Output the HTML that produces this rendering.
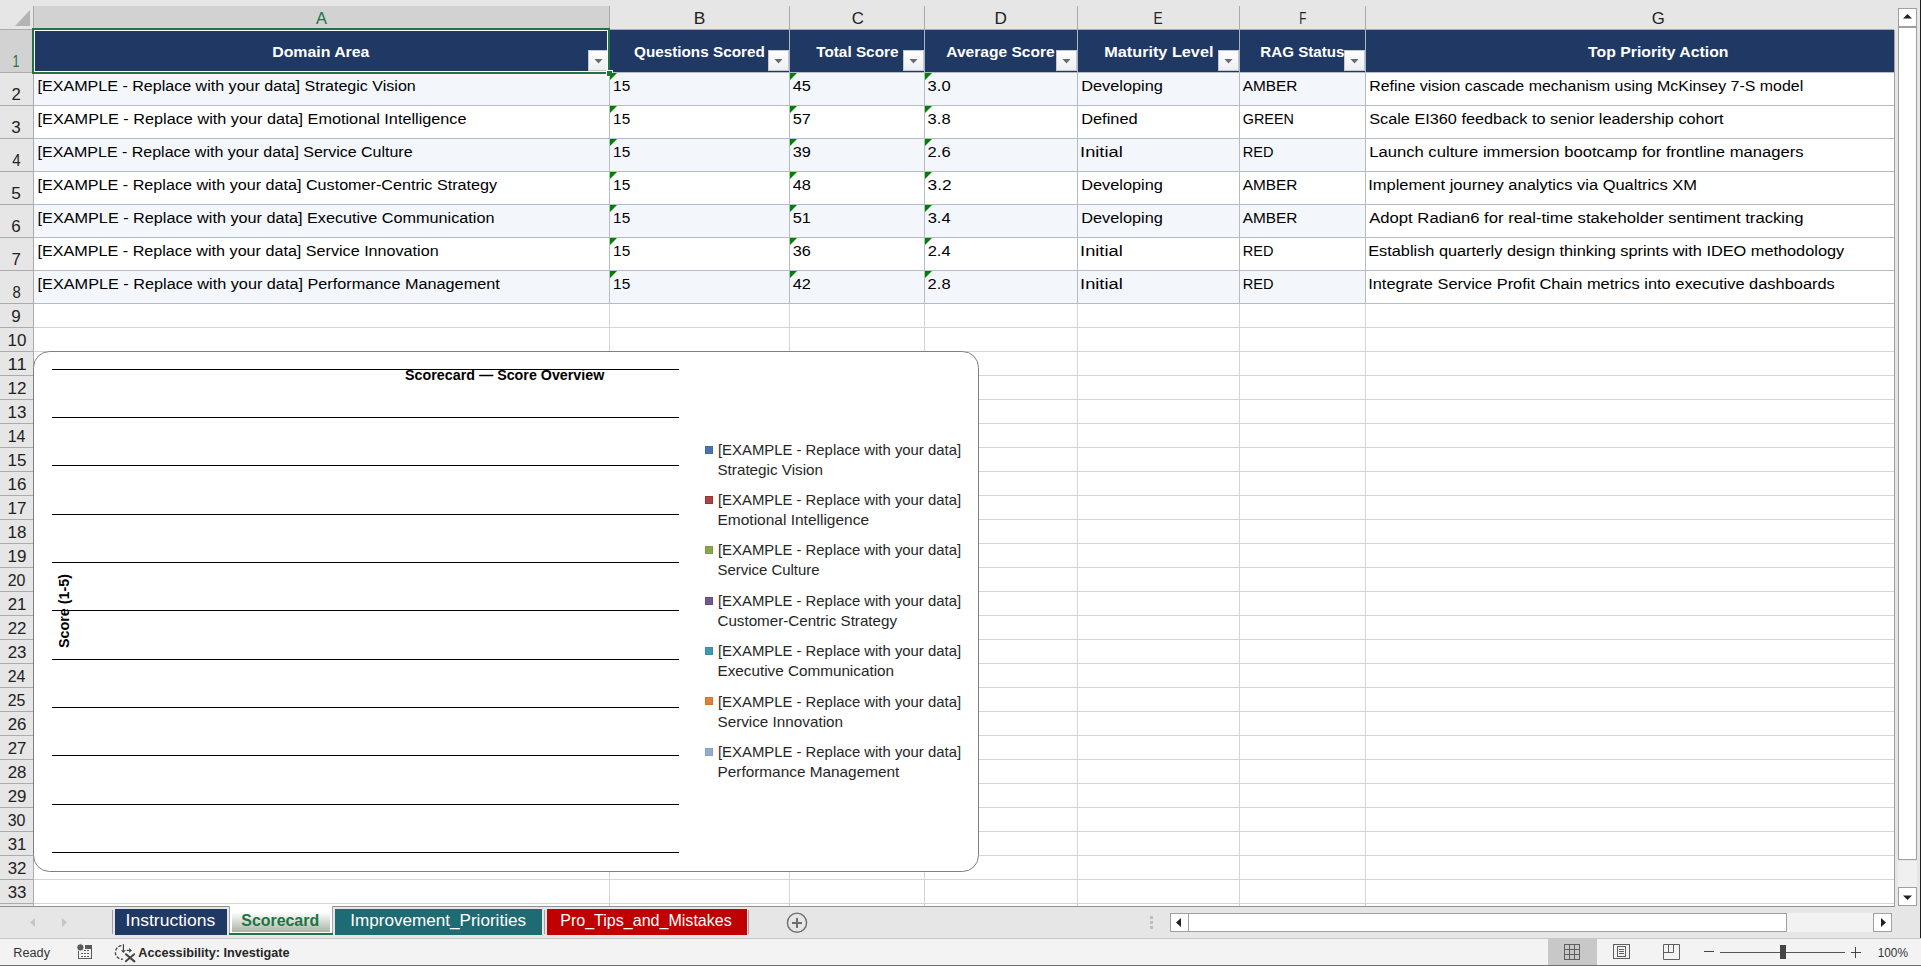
<!DOCTYPE html>
<html><head><meta charset="utf-8"><title>Scorecard</title>
<style>html,body{margin:0;padding:0;background:#E6E6E6;overflow:hidden;}svg{display:block;}</style>
</head><body>
<svg width="1921" height="966" viewBox="0 0 1921 966" font-family="'Liberation Sans', sans-serif">
<rect x="0" y="0" width="1921" height="966" fill="#E6E6E6" />
<rect x="34" y="30" width="1860" height="876" fill="#FFFFFF" />
<rect x="34" y="6" width="575" height="22" fill="#D2D2D2" />
<rect x="33" y="6" width="1" height="23" fill="#ABABAB" />
<rect x="609" y="6" width="1" height="23" fill="#ABABAB" />
<rect x="789" y="6" width="1" height="23" fill="#ABABAB" />
<rect x="924" y="6" width="1" height="23" fill="#ABABAB" />
<rect x="1077" y="6" width="1" height="23" fill="#ABABAB" />
<rect x="1239" y="6" width="1" height="23" fill="#ABABAB" />
<rect x="1365" y="6" width="1" height="23" fill="#ABABAB" />
<rect x="0" y="29" width="1894" height="1" fill="#ABABAB" />
<path d="M15 26 L30 10 L30 26 Z" fill="#B4B4B4"/>
<rect x="0" y="30" width="33" height="42" fill="#D2D2D2" />
<rect x="0" y="72" width="33" height="1" fill="#ABABAB" />
<rect x="0" y="105" width="33" height="1" fill="#ABABAB" />
<rect x="0" y="138" width="33" height="1" fill="#ABABAB" />
<rect x="0" y="171" width="33" height="1" fill="#ABABAB" />
<rect x="0" y="204" width="33" height="1" fill="#ABABAB" />
<rect x="0" y="237" width="33" height="1" fill="#ABABAB" />
<rect x="0" y="270" width="33" height="1" fill="#ABABAB" />
<rect x="0" y="303" width="33" height="1" fill="#ABABAB" />
<rect x="0" y="327" width="33" height="1" fill="#ABABAB" />
<rect x="0" y="351" width="33" height="1" fill="#ABABAB" />
<rect x="0" y="375" width="33" height="1" fill="#ABABAB" />
<rect x="0" y="399" width="33" height="1" fill="#ABABAB" />
<rect x="0" y="423" width="33" height="1" fill="#ABABAB" />
<rect x="0" y="447" width="33" height="1" fill="#ABABAB" />
<rect x="0" y="471" width="33" height="1" fill="#ABABAB" />
<rect x="0" y="495" width="33" height="1" fill="#ABABAB" />
<rect x="0" y="519" width="33" height="1" fill="#ABABAB" />
<rect x="0" y="543" width="33" height="1" fill="#ABABAB" />
<rect x="0" y="567" width="33" height="1" fill="#ABABAB" />
<rect x="0" y="591" width="33" height="1" fill="#ABABAB" />
<rect x="0" y="615" width="33" height="1" fill="#ABABAB" />
<rect x="0" y="639" width="33" height="1" fill="#ABABAB" />
<rect x="0" y="663" width="33" height="1" fill="#ABABAB" />
<rect x="0" y="687" width="33" height="1" fill="#ABABAB" />
<rect x="0" y="711" width="33" height="1" fill="#ABABAB" />
<rect x="0" y="735" width="33" height="1" fill="#ABABAB" />
<rect x="0" y="759" width="33" height="1" fill="#ABABAB" />
<rect x="0" y="783" width="33" height="1" fill="#ABABAB" />
<rect x="0" y="807" width="33" height="1" fill="#ABABAB" />
<rect x="0" y="831" width="33" height="1" fill="#ABABAB" />
<rect x="0" y="855" width="33" height="1" fill="#ABABAB" />
<rect x="0" y="879" width="33" height="1" fill="#ABABAB" />
<rect x="0" y="903" width="33" height="1" fill="#ABABAB" />
<rect x="33" y="6" width="1" height="900" fill="#ABABAB" />
<rect x="34" y="327" width="1860" height="1" fill="#D4D4D4" />
<rect x="34" y="351" width="1860" height="1" fill="#D4D4D4" />
<rect x="34" y="375" width="1860" height="1" fill="#D4D4D4" />
<rect x="34" y="399" width="1860" height="1" fill="#D4D4D4" />
<rect x="34" y="423" width="1860" height="1" fill="#D4D4D4" />
<rect x="34" y="447" width="1860" height="1" fill="#D4D4D4" />
<rect x="34" y="471" width="1860" height="1" fill="#D4D4D4" />
<rect x="34" y="495" width="1860" height="1" fill="#D4D4D4" />
<rect x="34" y="519" width="1860" height="1" fill="#D4D4D4" />
<rect x="34" y="543" width="1860" height="1" fill="#D4D4D4" />
<rect x="34" y="567" width="1860" height="1" fill="#D4D4D4" />
<rect x="34" y="591" width="1860" height="1" fill="#D4D4D4" />
<rect x="34" y="615" width="1860" height="1" fill="#D4D4D4" />
<rect x="34" y="639" width="1860" height="1" fill="#D4D4D4" />
<rect x="34" y="663" width="1860" height="1" fill="#D4D4D4" />
<rect x="34" y="687" width="1860" height="1" fill="#D4D4D4" />
<rect x="34" y="711" width="1860" height="1" fill="#D4D4D4" />
<rect x="34" y="735" width="1860" height="1" fill="#D4D4D4" />
<rect x="34" y="759" width="1860" height="1" fill="#D4D4D4" />
<rect x="34" y="783" width="1860" height="1" fill="#D4D4D4" />
<rect x="34" y="807" width="1860" height="1" fill="#D4D4D4" />
<rect x="34" y="831" width="1860" height="1" fill="#D4D4D4" />
<rect x="34" y="855" width="1860" height="1" fill="#D4D4D4" />
<rect x="34" y="879" width="1860" height="1" fill="#D4D4D4" />
<rect x="34" y="903" width="1860" height="1" fill="#D4D4D4" />
<rect x="609" y="304" width="1" height="602" fill="#D4D4D4" />
<rect x="789" y="304" width="1" height="602" fill="#D4D4D4" />
<rect x="924" y="304" width="1" height="602" fill="#D4D4D4" />
<rect x="1077" y="304" width="1" height="602" fill="#D4D4D4" />
<rect x="1239" y="304" width="1" height="602" fill="#D4D4D4" />
<rect x="1365" y="304" width="1" height="602" fill="#D4D4D4" />
<rect x="34" y="73" width="1331" height="32" fill="#F3F6FB" />
<rect x="34" y="139" width="1331" height="32" fill="#F3F6FB" />
<rect x="34" y="205" width="1331" height="32" fill="#F3F6FB" />
<rect x="34" y="271" width="1331" height="32" fill="#F3F6FB" />
<rect x="34" y="105" width="1860" height="1" fill="#B4BCC8" />
<rect x="34" y="138" width="1860" height="1" fill="#B4BCC8" />
<rect x="34" y="171" width="1860" height="1" fill="#B4BCC8" />
<rect x="34" y="204" width="1860" height="1" fill="#B4BCC8" />
<rect x="34" y="237" width="1860" height="1" fill="#B4BCC8" />
<rect x="34" y="270" width="1860" height="1" fill="#B4BCC8" />
<rect x="34" y="303" width="1860" height="1" fill="#B4BCC8" />
<rect x="609" y="73" width="1" height="231" fill="#B4BCC8" />
<rect x="789" y="73" width="1" height="231" fill="#B4BCC8" />
<rect x="924" y="73" width="1" height="231" fill="#B4BCC8" />
<rect x="1077" y="73" width="1" height="231" fill="#B4BCC8" />
<rect x="1239" y="73" width="1" height="231" fill="#B4BCC8" />
<rect x="1365" y="73" width="1" height="231" fill="#B4BCC8" />
<rect x="34" y="30" width="1860" height="42" fill="#1F3864" />
<rect x="609" y="30" width="1" height="42" fill="#A9B5C4" />
<rect x="789" y="30" width="1" height="42" fill="#A9B5C4" />
<rect x="924" y="30" width="1" height="42" fill="#A9B5C4" />
<rect x="1077" y="30" width="1" height="42" fill="#A9B5C4" />
<rect x="1239" y="30" width="1" height="42" fill="#A9B5C4" />
<rect x="1365" y="30" width="1" height="42" fill="#A9B5C4" />
<rect x="34" y="72" width="1860" height="1" fill="#B4BCC8" />
<rect x="1894" y="30" width="1" height="877" fill="#A0A0A0" />
<defs></defs>
<rect x="588" y="50" width="21" height="21" fill="url(#ddg)" />
<rect x="588.5" y="50.5" width="20" height="20" fill="none" stroke="#C4C7CC" stroke-width="1"/>
<path d="M594.5 59 L602.5 59 L598.5 63.5 Z" fill="#6B6B6B"/>
<defs></defs>
<rect x="768" y="50" width="21" height="21" fill="url(#ddg)" />
<rect x="768.5" y="50.5" width="20" height="20" fill="none" stroke="#C4C7CC" stroke-width="1"/>
<path d="M774.5 59 L782.5 59 L778.5 63.5 Z" fill="#6B6B6B"/>
<defs></defs>
<rect x="903" y="50" width="21" height="21" fill="url(#ddg)" />
<rect x="903.5" y="50.5" width="20" height="20" fill="none" stroke="#C4C7CC" stroke-width="1"/>
<path d="M909.5 59 L917.5 59 L913.5 63.5 Z" fill="#6B6B6B"/>
<defs></defs>
<rect x="1056" y="50" width="21" height="21" fill="url(#ddg)" />
<rect x="1056.5" y="50.5" width="20" height="20" fill="none" stroke="#C4C7CC" stroke-width="1"/>
<path d="M1062.5 59 L1070.5 59 L1066.5 63.5 Z" fill="#6B6B6B"/>
<defs></defs>
<rect x="1218" y="50" width="21" height="21" fill="url(#ddg)" />
<rect x="1218.5" y="50.5" width="20" height="20" fill="none" stroke="#C4C7CC" stroke-width="1"/>
<path d="M1224.5 59 L1232.5 59 L1228.5 63.5 Z" fill="#6B6B6B"/>
<defs></defs>
<rect x="1344" y="50" width="21" height="21" fill="url(#ddg)" />
<rect x="1344.5" y="50.5" width="20" height="20" fill="none" stroke="#C4C7CC" stroke-width="1"/>
<path d="M1350.5 59 L1358.5 59 L1354.5 63.5 Z" fill="#6B6B6B"/>
<rect x="32" y="28" width="578" height="2" fill="#217346" />
<rect x="32" y="28" width="2" height="46" fill="#217346" />
<rect x="608" y="28" width="2" height="46" fill="#217346" />
<rect x="32" y="72" width="578" height="2" fill="#217346" />
<rect x="34" y="30" width="574" height="1" fill="#FFFFFF" />
<rect x="34" y="30" width="1" height="42" fill="#FFFFFF" />
<rect x="607" y="30" width="1" height="42" fill="#FFFFFF" />
<rect x="34" y="71" width="574" height="1" fill="#FFFFFF" />
<rect x="606" y="70" width="7" height="7" fill="#FFFFFF" />
<rect x="607" y="71" width="5" height="5" fill="#217346" />
<path d="M610 73 L617 73 L610 80 Z" fill="#008000"/>
<path d="M790 73 L797 73 L790 80 Z" fill="#008000"/>
<path d="M925 73 L932 73 L925 80 Z" fill="#008000"/>
<path d="M610 106 L617 106 L610 113 Z" fill="#008000"/>
<path d="M790 106 L797 106 L790 113 Z" fill="#008000"/>
<path d="M925 106 L932 106 L925 113 Z" fill="#008000"/>
<path d="M610 139 L617 139 L610 146 Z" fill="#008000"/>
<path d="M790 139 L797 139 L790 146 Z" fill="#008000"/>
<path d="M925 139 L932 139 L925 146 Z" fill="#008000"/>
<path d="M610 172 L617 172 L610 179 Z" fill="#008000"/>
<path d="M790 172 L797 172 L790 179 Z" fill="#008000"/>
<path d="M925 172 L932 172 L925 179 Z" fill="#008000"/>
<path d="M610 205 L617 205 L610 212 Z" fill="#008000"/>
<path d="M790 205 L797 205 L790 212 Z" fill="#008000"/>
<path d="M925 205 L932 205 L925 212 Z" fill="#008000"/>
<path d="M610 238 L617 238 L610 245 Z" fill="#008000"/>
<path d="M790 238 L797 238 L790 245 Z" fill="#008000"/>
<path d="M925 238 L932 238 L925 245 Z" fill="#008000"/>
<path d="M610 271 L617 271 L610 278 Z" fill="#008000"/>
<path d="M790 271 L797 271 L790 278 Z" fill="#008000"/>
<path d="M925 271 L932 271 L925 278 Z" fill="#008000"/>
<g font-family="'Liberation Sans', sans-serif">
<text x="315.90" y="24" font-size="17" font-weight="normal" fill="#217346" textLength="10.94" lengthAdjust="spacingAndGlyphs" >A</text>
<text x="693.87" y="24" font-size="17" font-weight="normal" fill="#222222" textLength="11.61" lengthAdjust="spacingAndGlyphs" >B</text>
<text x="851.79" y="24" font-size="17" font-weight="normal" fill="#222222" textLength="12.12" lengthAdjust="spacingAndGlyphs" >C</text>
<text x="994.47" y="24" font-size="17" font-weight="normal" fill="#222222" textLength="12.38" lengthAdjust="spacingAndGlyphs" >D</text>
<text x="1153.46" y="24" font-size="17" font-weight="normal" fill="#222222" textLength="9.17" lengthAdjust="spacingAndGlyphs" >E</text>
<text x="1299.34" y="24" font-size="17" font-weight="normal" fill="#222222" textLength="7.12" lengthAdjust="spacingAndGlyphs" >F</text>
<text x="1651.68" y="24" font-size="17" font-weight="normal" fill="#222222" textLength="13.03" lengthAdjust="spacingAndGlyphs" >G</text>
<text x="12.41" y="67" font-size="16.5" font-weight="normal" fill="#217346" textLength="6.92" lengthAdjust="spacingAndGlyphs" >1</text>
<text x="11.43" y="100" font-size="16.5" font-weight="normal" fill="#222222" textLength="9.31" lengthAdjust="spacingAndGlyphs" >2</text>
<text x="11.34" y="133" font-size="16.5" font-weight="normal" fill="#222222" textLength="9.45" lengthAdjust="spacingAndGlyphs" >3</text>
<text x="12.37" y="166" font-size="16.5" font-weight="normal" fill="#222222" textLength="8.40" lengthAdjust="spacingAndGlyphs" >4</text>
<text x="11.29" y="199" font-size="16.5" font-weight="normal" fill="#222222" textLength="9.60" lengthAdjust="spacingAndGlyphs" >5</text>
<text x="11.34" y="232" font-size="16.5" font-weight="normal" fill="#222222" textLength="9.45" lengthAdjust="spacingAndGlyphs" >6</text>
<text x="11.43" y="265" font-size="16.5" font-weight="normal" fill="#222222" textLength="9.31" lengthAdjust="spacingAndGlyphs" >7</text>
<text x="12.46" y="298" font-size="16.5" font-weight="normal" fill="#222222" textLength="8.27" lengthAdjust="spacingAndGlyphs" >8</text>
<text x="11.34" y="322" font-size="16.5" font-weight="normal" fill="#222222" textLength="9.45" lengthAdjust="spacingAndGlyphs" >9</text>
<text x="7.55" y="346" font-size="16.5" font-weight="normal" fill="#222222" textLength="18.92" lengthAdjust="spacingAndGlyphs" >10</text>
<text x="7.57" y="370" font-size="16.5" font-weight="normal" fill="#222222" textLength="19.00" lengthAdjust="spacingAndGlyphs" >11</text>
<text x="7.52" y="394" font-size="16.5" font-weight="normal" fill="#222222" textLength="18.98" lengthAdjust="spacingAndGlyphs" >12</text>
<text x="7.57" y="418" font-size="16.5" font-weight="normal" fill="#222222" textLength="18.92" lengthAdjust="spacingAndGlyphs" >13</text>
<text x="7.64" y="442" font-size="16.5" font-weight="normal" fill="#222222" textLength="17.74" lengthAdjust="spacingAndGlyphs" >14</text>
<text x="7.57" y="466" font-size="16.5" font-weight="normal" fill="#222222" textLength="18.92" lengthAdjust="spacingAndGlyphs" >15</text>
<text x="7.57" y="490" font-size="16.5" font-weight="normal" fill="#222222" textLength="18.92" lengthAdjust="spacingAndGlyphs" >16</text>
<text x="7.52" y="514" font-size="16.5" font-weight="normal" fill="#222222" textLength="18.98" lengthAdjust="spacingAndGlyphs" >17</text>
<text x="7.57" y="538" font-size="16.5" font-weight="normal" fill="#222222" textLength="18.92" lengthAdjust="spacingAndGlyphs" >18</text>
<text x="7.52" y="562" font-size="16.5" font-weight="normal" fill="#222222" textLength="18.98" lengthAdjust="spacingAndGlyphs" >19</text>
<text x="7.72" y="586" font-size="16.5" font-weight="normal" fill="#222222" textLength="17.74" lengthAdjust="spacingAndGlyphs" >20</text>
<text x="7.67" y="610" font-size="16.5" font-weight="normal" fill="#222222" textLength="18.78" lengthAdjust="spacingAndGlyphs" >21</text>
<text x="7.67" y="634" font-size="16.5" font-weight="normal" fill="#222222" textLength="18.78" lengthAdjust="spacingAndGlyphs" >22</text>
<text x="7.67" y="658" font-size="16.5" font-weight="normal" fill="#222222" textLength="18.78" lengthAdjust="spacingAndGlyphs" >23</text>
<text x="7.69" y="682" font-size="16.5" font-weight="normal" fill="#222222" textLength="17.74" lengthAdjust="spacingAndGlyphs" >24</text>
<text x="7.73" y="706" font-size="16.5" font-weight="normal" fill="#222222" textLength="17.67" lengthAdjust="spacingAndGlyphs" >25</text>
<text x="7.67" y="730" font-size="16.5" font-weight="normal" fill="#222222" textLength="18.78" lengthAdjust="spacingAndGlyphs" >26</text>
<text x="7.67" y="754" font-size="16.5" font-weight="normal" fill="#222222" textLength="18.78" lengthAdjust="spacingAndGlyphs" >27</text>
<text x="7.67" y="778" font-size="16.5" font-weight="normal" fill="#222222" textLength="18.78" lengthAdjust="spacingAndGlyphs" >28</text>
<text x="7.67" y="802" font-size="16.5" font-weight="normal" fill="#222222" textLength="18.78" lengthAdjust="spacingAndGlyphs" >29</text>
<text x="7.72" y="826" font-size="16.5" font-weight="normal" fill="#222222" textLength="17.74" lengthAdjust="spacingAndGlyphs" >30</text>
<text x="7.67" y="850" font-size="16.5" font-weight="normal" fill="#222222" textLength="18.78" lengthAdjust="spacingAndGlyphs" >31</text>
<text x="7.67" y="874" font-size="16.5" font-weight="normal" fill="#222222" textLength="18.78" lengthAdjust="spacingAndGlyphs" >32</text>
<text x="7.67" y="898" font-size="16.5" font-weight="normal" fill="#222222" textLength="18.78" lengthAdjust="spacingAndGlyphs" >33</text>
<text x="272.18" y="57" font-size="15.5" font-weight="bold" fill="#FFFFFF" textLength="97.26" lengthAdjust="spacingAndGlyphs" >Domain Area</text>
<text x="634.00" y="57" font-size="15.5" font-weight="bold" fill="#FFFFFF" textLength="130.75" lengthAdjust="spacingAndGlyphs" >Questions Scored</text>
<text x="816.19" y="57" font-size="15.5" font-weight="bold" fill="#FFFFFF" textLength="82.28" lengthAdjust="spacingAndGlyphs" >Total Score</text>
<text x="946.28" y="57" font-size="15.5" font-weight="bold" fill="#FFFFFF" textLength="108.42" lengthAdjust="spacingAndGlyphs" >Average Score</text>
<text x="1104.27" y="57" font-size="15.5" font-weight="bold" fill="#FFFFFF" textLength="109.17" lengthAdjust="spacingAndGlyphs" >Maturity Level</text>
<text x="1260.37" y="57" font-size="15.5" font-weight="bold" fill="#FFFFFF" textLength="84.07" lengthAdjust="spacingAndGlyphs" >RAG Status</text>
<text x="1588.10" y="57" font-size="15.5" font-weight="bold" fill="#FFFFFF" textLength="140.39" lengthAdjust="spacingAndGlyphs" >Top Priority Action</text>
<text x="37.60" y="91" font-size="15.5" font-weight="normal" fill="#000000" textLength="378.21" lengthAdjust="spacingAndGlyphs" >[EXAMPLE - Replace with your data] Strategic Vision</text>
<text x="613.10" y="91" font-size="15.5" font-weight="normal" fill="#000000" textLength="17.10" lengthAdjust="spacingAndGlyphs" >15</text>
<text x="792.74" y="91" font-size="15.5" font-weight="normal" fill="#000000" textLength="18.17" lengthAdjust="spacingAndGlyphs" >45</text>
<text x="927.64" y="91" font-size="15.5" font-weight="normal" fill="#000000" textLength="22.97" lengthAdjust="spacingAndGlyphs" >3.0</text>
<text x="1081.16" y="91" font-size="15.5" font-weight="normal" fill="#000000" textLength="81.71" lengthAdjust="spacingAndGlyphs" >Developing</text>
<text x="1242.78" y="91" font-size="15.5" font-weight="normal" fill="#000000" textLength="54.69" lengthAdjust="spacingAndGlyphs" >AMBER</text>
<text x="1369.19" y="91" font-size="15.5" font-weight="normal" fill="#000000" textLength="434.04" lengthAdjust="spacingAndGlyphs" >Refine vision cascade mechanism using McKinsey 7-S model</text>
<text x="37.60" y="124" font-size="15.5" font-weight="normal" fill="#000000" textLength="428.95" lengthAdjust="spacingAndGlyphs" >[EXAMPLE - Replace with your data] Emotional Intelligence</text>
<text x="613.10" y="124" font-size="15.5" font-weight="normal" fill="#000000" textLength="17.10" lengthAdjust="spacingAndGlyphs" >15</text>
<text x="792.73" y="124" font-size="15.5" font-weight="normal" fill="#000000" textLength="18.17" lengthAdjust="spacingAndGlyphs" >57</text>
<text x="927.64" y="124" font-size="15.5" font-weight="normal" fill="#000000" textLength="22.97" lengthAdjust="spacingAndGlyphs" >3.8</text>
<text x="1081.15" y="124" font-size="15.5" font-weight="normal" fill="#000000" textLength="56.51" lengthAdjust="spacingAndGlyphs" >Defined</text>
<text x="1242.77" y="124" font-size="15.5" font-weight="normal" fill="#000000" textLength="51.10" lengthAdjust="spacingAndGlyphs" >GREEN</text>
<text x="1369.19" y="124" font-size="15.5" font-weight="normal" fill="#000000" textLength="354.47" lengthAdjust="spacingAndGlyphs" >Scale EI360 feedback to senior leadership cohort</text>
<text x="37.60" y="157" font-size="15.5" font-weight="normal" fill="#000000" textLength="374.96" lengthAdjust="spacingAndGlyphs" >[EXAMPLE - Replace with your data] Service Culture</text>
<text x="613.10" y="157" font-size="15.5" font-weight="normal" fill="#000000" textLength="17.10" lengthAdjust="spacingAndGlyphs" >15</text>
<text x="792.75" y="157" font-size="15.5" font-weight="normal" fill="#000000" textLength="18.11" lengthAdjust="spacingAndGlyphs" >39</text>
<text x="927.64" y="157" font-size="15.5" font-weight="normal" fill="#000000" textLength="22.97" lengthAdjust="spacingAndGlyphs" >2.6</text>
<text x="1080.10" y="157" font-size="15.5" font-weight="normal" fill="#000000" textLength="42.60" lengthAdjust="spacingAndGlyphs" >Initial</text>
<text x="1242.77" y="157" font-size="15.5" font-weight="normal" fill="#000000" textLength="30.72" lengthAdjust="spacingAndGlyphs" >RED</text>
<text x="1369.20" y="157" font-size="15.5" font-weight="normal" fill="#000000" textLength="434.52" lengthAdjust="spacingAndGlyphs" >Launch culture immersion bootcamp for frontline managers</text>
<text x="37.60" y="190" font-size="15.5" font-weight="normal" fill="#000000" textLength="459.46" lengthAdjust="spacingAndGlyphs" >[EXAMPLE - Replace with your data] Customer-Centric Strategy</text>
<text x="613.10" y="190" font-size="15.5" font-weight="normal" fill="#000000" textLength="17.10" lengthAdjust="spacingAndGlyphs" >15</text>
<text x="792.74" y="190" font-size="15.5" font-weight="normal" fill="#000000" textLength="18.17" lengthAdjust="spacingAndGlyphs" >48</text>
<text x="927.61" y="190" font-size="15.5" font-weight="normal" fill="#000000" textLength="24.02" lengthAdjust="spacingAndGlyphs" >3.2</text>
<text x="1081.16" y="190" font-size="15.5" font-weight="normal" fill="#000000" textLength="81.71" lengthAdjust="spacingAndGlyphs" >Developing</text>
<text x="1242.78" y="190" font-size="15.5" font-weight="normal" fill="#000000" textLength="54.69" lengthAdjust="spacingAndGlyphs" >AMBER</text>
<text x="1368.19" y="190" font-size="15.5" font-weight="normal" fill="#000000" textLength="328.77" lengthAdjust="spacingAndGlyphs" >Implement journey analytics via Qualtrics XM</text>
<text x="37.60" y="223" font-size="15.5" font-weight="normal" fill="#000000" textLength="456.88" lengthAdjust="spacingAndGlyphs" >[EXAMPLE - Replace with your data] Executive Communication</text>
<text x="613.10" y="223" font-size="15.5" font-weight="normal" fill="#000000" textLength="17.10" lengthAdjust="spacingAndGlyphs" >15</text>
<text x="792.73" y="223" font-size="15.5" font-weight="normal" fill="#000000" textLength="18.17" lengthAdjust="spacingAndGlyphs" >51</text>
<text x="927.66" y="223" font-size="15.5" font-weight="normal" fill="#000000" textLength="22.93" lengthAdjust="spacingAndGlyphs" >3.4</text>
<text x="1081.16" y="223" font-size="15.5" font-weight="normal" fill="#000000" textLength="81.71" lengthAdjust="spacingAndGlyphs" >Developing</text>
<text x="1242.78" y="223" font-size="15.5" font-weight="normal" fill="#000000" textLength="54.69" lengthAdjust="spacingAndGlyphs" >AMBER</text>
<text x="1369.20" y="223" font-size="15.5" font-weight="normal" fill="#000000" textLength="434.37" lengthAdjust="spacingAndGlyphs" >Adopt Radian6 for real-time stakeholder sentiment tracking</text>
<text x="37.60" y="256" font-size="15.5" font-weight="normal" fill="#000000" textLength="401.02" lengthAdjust="spacingAndGlyphs" >[EXAMPLE - Replace with your data] Service Innovation</text>
<text x="613.10" y="256" font-size="15.5" font-weight="normal" fill="#000000" textLength="17.10" lengthAdjust="spacingAndGlyphs" >15</text>
<text x="792.75" y="256" font-size="15.5" font-weight="normal" fill="#000000" textLength="18.11" lengthAdjust="spacingAndGlyphs" >36</text>
<text x="927.66" y="256" font-size="15.5" font-weight="normal" fill="#000000" textLength="22.93" lengthAdjust="spacingAndGlyphs" >2.4</text>
<text x="1080.10" y="256" font-size="15.5" font-weight="normal" fill="#000000" textLength="42.60" lengthAdjust="spacingAndGlyphs" >Initial</text>
<text x="1242.77" y="256" font-size="15.5" font-weight="normal" fill="#000000" textLength="30.72" lengthAdjust="spacingAndGlyphs" >RED</text>
<text x="1368.19" y="256" font-size="15.5" font-weight="normal" fill="#000000" textLength="476.01" lengthAdjust="spacingAndGlyphs" >Establish quarterly design thinking sprints with IDEO methodology</text>
<text x="37.60" y="289" font-size="15.5" font-weight="normal" fill="#000000" textLength="462.15" lengthAdjust="spacingAndGlyphs" >[EXAMPLE - Replace with your data] Performance Management</text>
<text x="613.10" y="289" font-size="15.5" font-weight="normal" fill="#000000" textLength="17.10" lengthAdjust="spacingAndGlyphs" >15</text>
<text x="792.74" y="289" font-size="15.5" font-weight="normal" fill="#000000" textLength="18.17" lengthAdjust="spacingAndGlyphs" >42</text>
<text x="927.64" y="289" font-size="15.5" font-weight="normal" fill="#000000" textLength="22.97" lengthAdjust="spacingAndGlyphs" >2.8</text>
<text x="1080.10" y="289" font-size="15.5" font-weight="normal" fill="#000000" textLength="42.60" lengthAdjust="spacingAndGlyphs" >Initial</text>
<text x="1242.77" y="289" font-size="15.5" font-weight="normal" fill="#000000" textLength="30.72" lengthAdjust="spacingAndGlyphs" >RED</text>
<text x="1368.19" y="289" font-size="15.5" font-weight="normal" fill="#000000" textLength="466.61" lengthAdjust="spacingAndGlyphs" >Integrate Service Profit Chain metrics into executive dashboards</text>
</g>
<rect x="33.5" y="351.5" width="945" height="520" rx="16" ry="16" fill="#FFFFFF" stroke="#7F7F7F" stroke-width="1"/>
<rect x="52" y="369" width="627" height="1" fill="#000000" />
<rect x="52" y="417" width="627" height="1" fill="#000000" />
<rect x="52" y="465" width="627" height="1" fill="#000000" />
<rect x="52" y="514" width="627" height="1" fill="#000000" />
<rect x="52" y="562" width="627" height="1" fill="#000000" />
<rect x="52" y="610" width="627" height="1" fill="#000000" />
<rect x="52" y="659" width="627" height="1" fill="#000000" />
<rect x="52" y="707" width="627" height="1" fill="#000000" />
<rect x="52" y="755" width="627" height="1" fill="#000000" />
<rect x="52" y="804" width="627" height="1" fill="#000000" />
<rect x="52" y="852" width="627" height="1" fill="#000000" />
<g font-family="'Liberation Sans', sans-serif">
<text x="405.10" y="380" font-size="14" font-weight="bold" fill="#000000" textLength="199.22" lengthAdjust="spacingAndGlyphs" >Scorecard — Score Overview</text>
<g transform="translate(69,611) rotate(-90)">
<text x="-37.00" y="0" font-size="14.5" font-weight="bold" fill="#000000" textLength="74.04" lengthAdjust="spacingAndGlyphs" >Score (1-5)</text>
</g>
<rect x="705.5" y="446.5" width="7" height="7" fill="#4A74AC" stroke="#3F6AA3" stroke-width="1"/>
<text x="717.99" y="454.7" font-size="14.5" font-weight="normal" fill="#262626" textLength="243.06" lengthAdjust="spacingAndGlyphs" >[EXAMPLE - Replace with your data]</text>
<text x="717.48" y="474.7" font-size="14.5" font-weight="normal" fill="#262626" textLength="105.52" lengthAdjust="spacingAndGlyphs" >Strategic Vision</text>
<rect x="705.5" y="496.5" width="7" height="7" fill="#A94643" stroke="#A02F2D" stroke-width="1"/>
<text x="717.99" y="505.1" font-size="14.5" font-weight="normal" fill="#262626" textLength="243.06" lengthAdjust="spacingAndGlyphs" >[EXAMPLE - Replace with your data]</text>
<text x="717.48" y="525.0" font-size="14.5" font-weight="normal" fill="#262626" textLength="151.59" lengthAdjust="spacingAndGlyphs" >Emotional Intelligence</text>
<rect x="705.5" y="546.5" width="7" height="7" fill="#8AA54E" stroke="#7D9B3C" stroke-width="1"/>
<text x="717.99" y="555.4" font-size="14.5" font-weight="normal" fill="#262626" textLength="243.06" lengthAdjust="spacingAndGlyphs" >[EXAMPLE - Replace with your data]</text>
<text x="717.50" y="575.4" font-size="14.5" font-weight="normal" fill="#262626" textLength="102.03" lengthAdjust="spacingAndGlyphs" >Service Culture</text>
<rect x="705.5" y="597.5" width="7" height="7" fill="#71588F" stroke="#654B86" stroke-width="1"/>
<text x="717.99" y="605.8" font-size="14.5" font-weight="normal" fill="#262626" textLength="243.06" lengthAdjust="spacingAndGlyphs" >[EXAMPLE - Replace with your data]</text>
<text x="717.49" y="625.8" font-size="14.5" font-weight="normal" fill="#262626" textLength="179.54" lengthAdjust="spacingAndGlyphs" >Customer-Centric Strategy</text>
<rect x="705.5" y="647.5" width="7" height="7" fill="#4298B1" stroke="#3690AB" stroke-width="1"/>
<text x="717.99" y="656.1" font-size="14.5" font-weight="normal" fill="#262626" textLength="243.06" lengthAdjust="spacingAndGlyphs" >[EXAMPLE - Replace with your data]</text>
<text x="717.48" y="676.1" font-size="14.5" font-weight="normal" fill="#262626" textLength="176.56" lengthAdjust="spacingAndGlyphs" >Executive Communication</text>
<rect x="705.5" y="697.5" width="7" height="7" fill="#DA823C" stroke="#D9752A" stroke-width="1"/>
<text x="717.99" y="706.5" font-size="14.5" font-weight="normal" fill="#262626" textLength="243.06" lengthAdjust="spacingAndGlyphs" >[EXAMPLE - Replace with your data]</text>
<text x="717.49" y="726.5" font-size="14.5" font-weight="normal" fill="#262626" textLength="125.52" lengthAdjust="spacingAndGlyphs" >Service Innovation</text>
<rect x="705.5" y="748.5" width="7" height="7" fill="#95A9D1" stroke="#8AA2CC" stroke-width="1"/>
<text x="717.99" y="756.8" font-size="14.5" font-weight="normal" fill="#262626" textLength="243.06" lengthAdjust="spacingAndGlyphs" >[EXAMPLE - Replace with your data]</text>
<text x="717.49" y="776.8" font-size="14.5" font-weight="normal" fill="#262626" textLength="181.88" lengthAdjust="spacingAndGlyphs" >Performance Management</text>
</g>
<rect x="1895" y="0" width="25" height="907" fill="#E6E6E6" />
<rect x="1920" y="0" width="1" height="939" fill="#1E1E1E" />
<rect x="1898.5" y="8.5" width="18" height="18" fill="#FFFFFF" stroke="#A0A0A0"/>
<path d="M1903 18.5 L1912 18.5 L1907.5 14 Z" fill="#222"/>
<rect x="1898.5" y="27.5" width="18" height="832" fill="#FFFFFF" stroke="#A0A0A0"/>
<rect x="1898" y="861" width="19" height="26" fill="#F0F0F0" />
<rect x="1898.5" y="887.5" width="18" height="18" fill="#FFFFFF" stroke="#A0A0A0"/>
<path d="M1903 895.5 L1912 895.5 L1907.5 900 Z" fill="#222"/>
<rect x="0" y="906" width="1895" height="1" fill="#909090" />
<rect x="0" y="907" width="1920" height="31" fill="#E6E6E6" />
<rect x="0" y="938" width="1921" height="1" fill="#C8C8C8" />
<path d="M35 918 L35 927 L30 922.5 Z" fill="#C6C6C6"/>
<path d="M62 918 L62 927 L67 922.5 Z" fill="#C6C6C6"/>
<rect x="112" y="910" width="1" height="24" fill="#A0A0A0" />
<rect x="115" y="909" width="112" height="26" fill="#1F3864" />
<defs><linearGradient id="tabg" x1="0" y1="0" x2="0" y2="1"><stop offset="0" stop-color="#FFFFFF"/><stop offset="0.1" stop-color="#FFFFFF"/><stop offset="1" stop-color="#A8B5A3"/></linearGradient><linearGradient id="ddg" x1="0" y1="0" x2="0" y2="1"><stop offset="0" stop-color="#FFFFFF"/><stop offset="1" stop-color="#ECEEF2"/></linearGradient></defs>
<rect x="229" y="906" width="104" height="28" fill="#FFFFFF" />
<rect x="232" y="910" width="98" height="22" fill="url(#tabg)" />
<rect x="229" y="906" width="1" height="28" fill="#A6A6A6" />
<rect x="332" y="906" width="1" height="28" fill="#A6A6A6" />
<rect x="229" y="933" width="104" height="2" fill="#217346" />
<rect x="335" y="909" width="207" height="26" fill="#1F6B73" />
<rect x="544" y="910" width="1" height="24" fill="#A0A0A0" />
<rect x="547" y="909" width="200" height="26" fill="#C00000" />
<rect x="748" y="910" width="1" height="24" fill="#A0A0A0" />
<circle cx="797" cy="922.7" r="9.6" fill="none" stroke="#6E6E6E" stroke-width="1.4"/>
<rect x="792" y="922" width="10" height="2" fill="#6E6E6E" />
<rect x="796" y="918" width="2" height="10" fill="#6E6E6E" />
<g font-family="'Liberation Sans', sans-serif">
<text x="125.55" y="926" font-size="17" font-weight="normal" fill="#FFFFFF" textLength="89.70" lengthAdjust="spacingAndGlyphs" >Instructions</text>
<text x="241.29" y="926" font-size="16.5" font-weight="bold" fill="#217346" textLength="77.83" lengthAdjust="spacingAndGlyphs" >Scorecard</text>
<text x="350.24" y="926" font-size="17" font-weight="normal" fill="#FFFFFF" textLength="175.75" lengthAdjust="spacingAndGlyphs" >Improvement_Priorities</text>
<text x="560.19" y="926" font-size="17" font-weight="normal" fill="#FFFFFF" textLength="171.56" lengthAdjust="spacingAndGlyphs" >Pro_Tips_and_Mistakes</text>
</g>
<rect x="1150" y="916" width="3" height="3" fill="#BEBEBE" />
<rect x="1150" y="921" width="3" height="3" fill="#BEBEBE" />
<rect x="1150" y="926" width="3" height="3" fill="#BEBEBE" />
<rect x="1170.5" y="913.5" width="18" height="18" fill="#FFFFFF" stroke="#A0A0A0"/>
<path d="M1181 918 L1181 927 L1176 922.5 Z" fill="#222"/>
<rect x="1188.5" y="913.5" width="598" height="18" fill="#FFFFFF" stroke="#A0A0A0"/>
<rect x="1787" y="913" width="86" height="19" fill="#F2F2F2" />
<rect x="1873.5" y="913.5" width="18" height="18" fill="#FFFFFF" stroke="#A0A0A0"/>
<path d="M1881 918 L1881 927 L1886 922.5 Z" fill="#222"/>
<rect x="0" y="939" width="1921" height="26" fill="#F3F3F3" />
<rect x="0" y="965" width="1921" height="1" fill="#707070" />
<g font-family="'Liberation Sans', sans-serif">
<text x="13.34" y="957" font-size="12.5" font-weight="normal" fill="#333333" textLength="36.70" lengthAdjust="spacingAndGlyphs" >Ready</text>
<text x="138.30" y="957" font-size="13" font-weight="bold" fill="#262626" textLength="151.25" lengthAdjust="spacingAndGlyphs" >Accessibility: Investigate</text>
<text x="1877.66" y="957" font-size="12.5" font-weight="normal" fill="#333333" textLength="30.31" lengthAdjust="spacingAndGlyphs" >100%</text>
</g>
<rect x="78" y="951" width="1" height="8" fill="#5A5A5A" />
<rect x="78" y="958" width="14" height="1" fill="#5A5A5A" />
<rect x="91" y="945" width="1" height="14" fill="#5A5A5A" />
<rect x="85" y="945" width="7" height="4" fill="#5A5A5A" />
<rect x="84" y="950" width="2" height="1" fill="#5A5A5A" />
<rect x="87" y="950" width="2" height="1" fill="#5A5A5A" />
<rect x="81" y="953" width="2" height="1" fill="#5A5A5A" />
<rect x="84" y="953" width="2" height="1" fill="#5A5A5A" />
<rect x="87" y="953" width="2" height="1" fill="#5A5A5A" />
<rect x="81" y="956" width="2" height="1" fill="#5A5A5A" />
<rect x="84" y="956" width="2" height="1" fill="#5A5A5A" />
<rect x="87" y="956" width="2" height="1" fill="#5A5A5A" />
<circle cx="80.4" cy="947.4" r="3.6" fill="#5A5A5A" stroke="#FFFFFF" stroke-width="0.8"/>
<path d="M121.5 945.7 A6.6 6.6 0 0 0 122.8 959.2" fill="none" stroke="#444" stroke-width="1.3" stroke-dasharray="3.2 1.6"/>
<path d="M123.4 944.3 L123.4 950.5" fill="none" stroke="#444" stroke-width="1.2"/>
<path d="M121 950.2 L125.8 950.2 L123.4 952.9 Z" fill="#444"/>
<path d="M126.7 950.4 L129.5 950.4" fill="none" stroke="#444" stroke-width="1.2"/>
<path d="M129.2 948 L132 950.4 L129.2 952.8 Z" fill="#444"/>
<path d="M126 954.3 L134.4 961.4" fill="none" stroke="#444" stroke-width="2.1" stroke-linecap="round"/>
<path d="M125.8 961.2 L134.2 954.2" fill="none" stroke="#444" stroke-width="1.8" stroke-linecap="round"/>
<rect x="1548" y="939" width="49" height="26" fill="#C8C8C8" />
<rect x="1564.5" y="944.5" width="15" height="15" fill="none" stroke="#5F5F5F"/>
<rect x="1569" y="945" width="1" height="15" fill="#5F5F5F" />
<rect x="1574" y="945" width="1" height="15" fill="#5F5F5F" />
<rect x="1565" y="949" width="15" height="1" fill="#5F5F5F" />
<rect x="1565" y="954" width="15" height="1" fill="#5F5F5F" />
<rect x="1613.5" y="944.5" width="16" height="14" fill="none" stroke="#5F5F5F"/>
<rect x="1617.5" y="946.5" width="8" height="10" fill="none" stroke="#5F5F5F"/>
<rect x="1619" y="949" width="5" height="1" fill="#5F5F5F" />
<rect x="1619" y="951" width="5" height="1" fill="#5F5F5F" />
<rect x="1619" y="953" width="5" height="1" fill="#5F5F5F" />
<path d="M1663.5 944.5 L1679.5 944.5 L1679.5 959.5 L1663.5 959.5 Z M1663.5 952.5 L1673.5 952.5 L1673.5 944.5 M1668.5 944.5 L1668.5 952.5" fill="none" stroke="#5F5F5F"/>
<rect x="1704" y="951" width="10" height="1" fill="#444444" />
<rect x="1720" y="952" width="125" height="1" fill="#555555" />
<rect x="1780" y="945" width="6" height="14" fill="#444444" />
<rect x="1851" y="952" width="10" height="1" fill="#444444" />
<rect x="1855" y="947" width="1" height="11" fill="#444444" />
</svg>
</body></html>
